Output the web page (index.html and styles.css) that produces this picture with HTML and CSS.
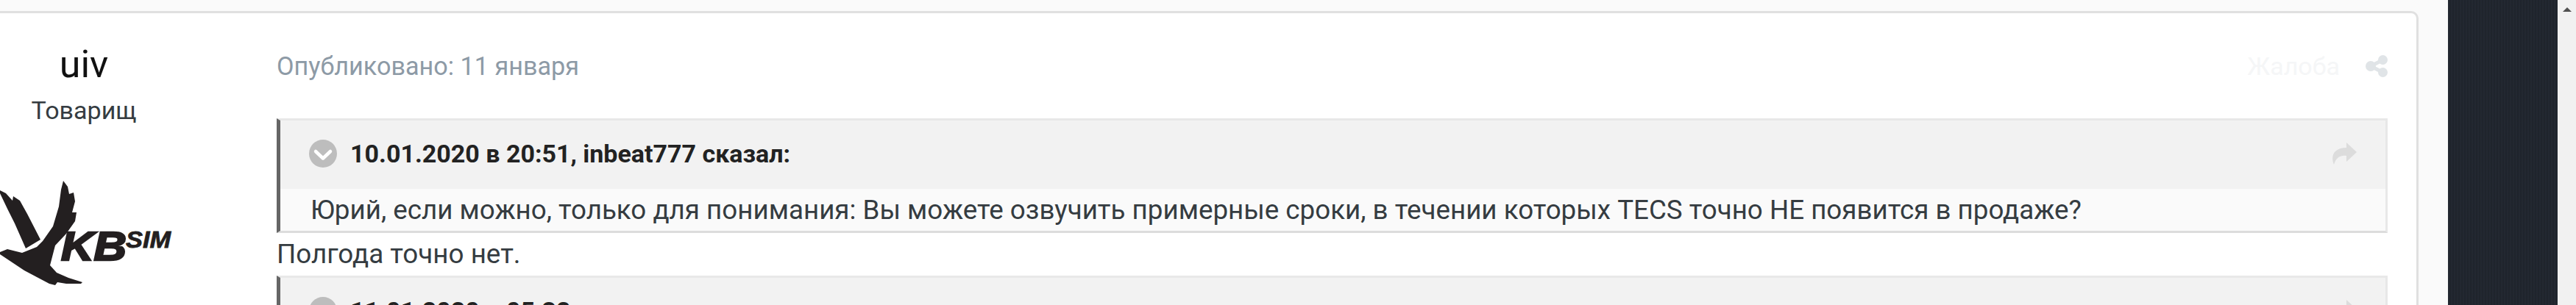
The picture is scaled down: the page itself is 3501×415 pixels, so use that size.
FILE: index.html
```html
<!DOCTYPE html>
<html lang="ru">
<head>
  <meta charset="UTF-8" />
  <title>Комментарий</title>
  <link rel="stylesheet" href="styles.css">
</head>
<body>
  <div class="page">
    <main class="feed">
      <article class="post">
        <aside class="author">
          <h3 class="author-name">uiv</h3>
          <div class="author-rank">Товарищ</div>
          <svg class="author-logo" viewBox="0 0 300 195" width="300" height="195">
            <path class="logo-ink" d="M86 25 L92 33 L94 43 L100 41 L102 53 L98 68 L104 68 L102 80 L90 97 L75 113 L68 140 L77 150 L93 157 L112 163 L110 165 L90 165 L78 163 L75 167 L67 165 L33 147 L0 125 L0 122 L10 118 L30 123 L50 115 L58 107 L72 87 L80 60 L83 37 Z" />
            <path class="logo-ink" d="M0 38 L8 42 L17 52 L18 46 L27 52 L37 70 L55 105 L35 117 L20 83 L10 63 L0 42 Z" />
            <text class="logo-kb" x="83" y="133" textLength="89" lengthAdjust="spacingAndGlyphs">KB</text>
            <text class="logo-sim" x="171" y="116" textLength="61" lengthAdjust="spacingAndGlyphs">SIM</text>
          </svg>
        </aside>
        <div class="post-body">
          <div class="post-meta">
            <span class="post-date">Опубликовано: 11 января</span>
            <span class="post-report">Жалоба</span>
            <svg class="icon-share" viewBox="0 0 30 30" width="30" height="30">
              <path d="M7 15 L23.500 6.500 M7 15 L23.500 23.500" />
              <circle cx="7" cy="15" r="7" />
              <circle cx="23.500" cy="6.500" r="6.500" />
              <circle cx="23.500" cy="23.500" r="6.500" />
            </svg>
          </div>

          <blockquote class="quote">
            <div class="quote-head">
              <svg class="icon-toggle" viewBox="0 0 38 38" width="38" height="38">
                <circle cx="19" cy="19" r="19" />
                <path d="M9 16 L19 25.500 L29 16" />
              </svg>
              <span class="quote-cite">10.01.2020 в 20:51, inbeat777 сказал:</span>
              <svg class="icon-forward" viewBox="0 0 34 30" width="34" height="30">
                <path d="M20 0 L34 13 L20 26 L20 18 C12 17 6 20 3 30 C-2 18 3 7 20 7 Z" />
              </svg>
            </div>
            <div class="quote-text">Юрий, если можно, только для понимания: Вы можете озвучить примерные сроки, в течении которых TECS точно НЕ появится в продаже?</div>
          </blockquote>

          <p class="post-text">Полгода точно нет.</p>

          <blockquote class="quote">
            <div class="quote-head">
              <svg class="icon-toggle" viewBox="0 0 38 38" width="38" height="38">
                <circle cx="19" cy="19" r="19" />
                <path d="M9 16 L19 25.500 L29 16" />
              </svg>
              <span class="quote-cite">11.01.2020 в 05:32</span>
              <svg class="icon-forward" viewBox="0 0 34 30" width="34" height="30">
                <path d="M20 0 L34 13 L20 26 L20 18 C12 17 6 20 3 30 C-2 18 3 7 20 7 Z" />
              </svg>
            </div>
          </blockquote>
        </div>
      </article>
    </main>
    <div class="side-panel"></div>
    <div class="scrollbar"><span class="scroll-up"></span></div>
  </div>
</body>
</html>
```

FILE: styles.css
```css
html, body { margin: 0; height: 100%; overflow: hidden; }
body { font-family: Roboto, "Liberation Sans", sans-serif; color: #353c41; background: #fafafa; }

.page { display: flex; height: 415px; overflow: hidden; }
.feed { flex: 1; padding: 15px 40px 0 0; min-width: 0; }
.side-panel { width: 149px; background-color: #20252e; background-image: repeating-linear-gradient(90deg, rgba(255,255,255,.015) 0 2px, rgba(0,0,0,.04) 2px 4px); }
.scrollbar { width: 25px; background: #f1f1f1; display: flex; justify-content: center; padding-top: 10px; box-sizing: border-box; }
.scroll-up { width: 0; height: 0; border-left: 6px solid transparent; border-right: 6px solid transparent; border-bottom: 6px solid #505050; }

.post { display: flex; height: 500px; background: #fff; border: 3px solid #e0e0e0; border-left: 0; border-radius: 0 10px 0 0; }
.author { width: 228px; flex: none; text-align: center; }
.author-name { margin: 40px 0 0; font-size: 52px; line-height: 60px; font-weight: 400; color: #111; }
.author-rank { margin-top: 12px; font-size: 34px; line-height: 40px; color: #353c41; }
.author-logo { display: block; margin-top: 51px; }
.logo-ink { fill: #231f20; }
.logo-kb { font-family: "Liberation Sans", sans-serif; font-size: 55px; font-weight: 700; font-style: italic; fill: #231f20; stroke: #231f20; stroke-width: 2.500; }
.logo-sim { font-family: "Liberation Sans", sans-serif; font-size: 31px; font-weight: 700; font-style: italic; fill: #231f20; stroke: #231f20; stroke-width: .8; }

.post-body { flex: 1; min-width: 0; padding: 0 39px 0 148px; }
.post-meta { display: flex; align-items: center; height: 143px; }
.post-date { flex: 1; font-size: 34.200px; color: #8d9aa6; }
.post-report { font-size: 34px; color: #f5f6f7; margin-right: 35px; }
.icon-share { fill: #e0e4e7; stroke: #e0e4e7; }
.icon-share circle { stroke: none; }
.icon-share path { stroke-width: 5; fill: none; }

.quote { margin: 0; box-sizing: border-box; border: 3px solid #e8e8e8; border-left: 5px solid #666; border-bottom-color: #dcdcdc; }
.quote-head { display: flex; align-items: center; height: 93px; padding: 0 39px 4px 39px; box-sizing: border-box; background: #f2f2f2; }
.icon-toggle { flex: none; fill: #bdbdbd; }
.icon-toggle path { fill: none; stroke: #fff; stroke-width: 4.500; stroke-linecap: round; stroke-linejoin: round; }
.quote-cite { flex: 1; margin-left: 18px; font-size: 34px; font-weight: 700; color: #222; }
.icon-forward { flex: none; fill: #dcdcdc; }
.quote-text { height: 57px; line-height: 57px; padding-left: 41px; background: #fafafa; font-size: 36.750px; white-space: nowrap; }
.post-text { margin: 0; height: 58px; line-height: 58px; font-size: 36.800px; }
```
